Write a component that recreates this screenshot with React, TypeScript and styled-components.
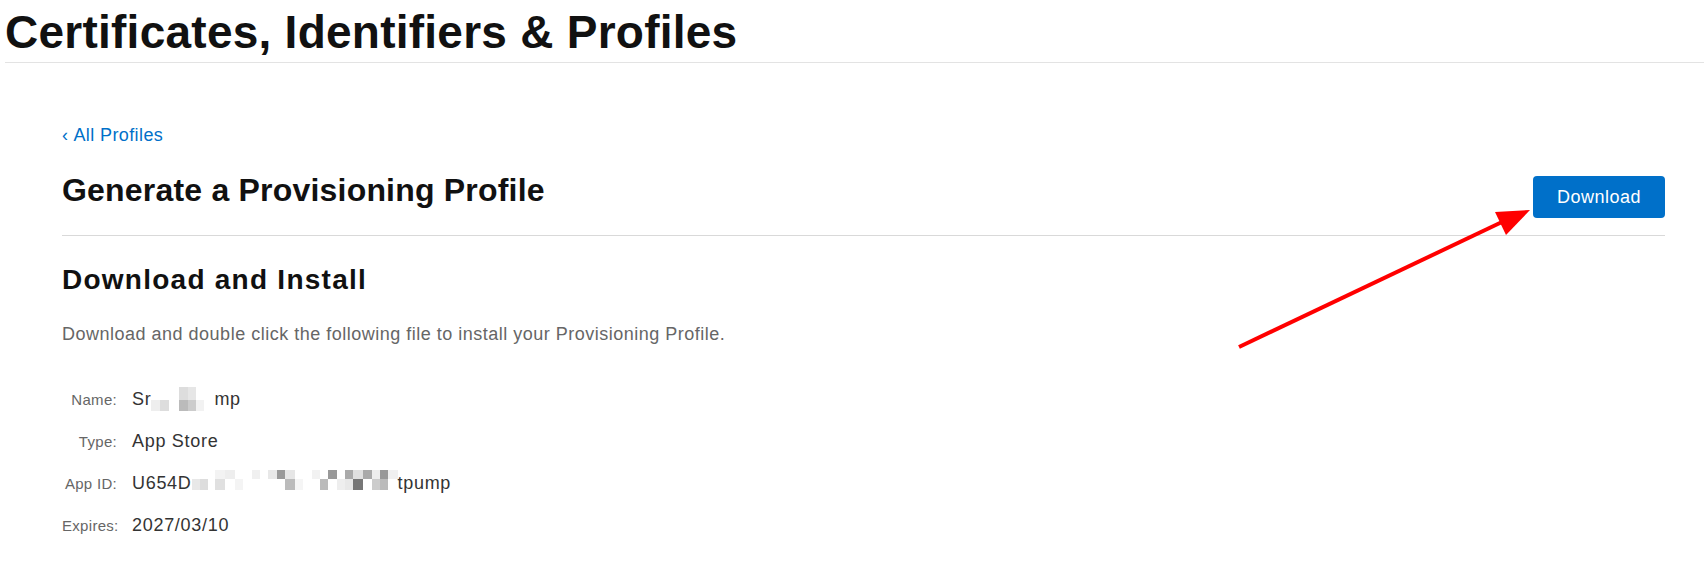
import React from "react";
import styled, { createGlobalStyle } from "styled-components";

const GlobalStyle = createGlobalStyle`
  html, body {
    margin: 0;
    padding: 0;
    background: #ffffff;
  }
  body {
    font-family: "Liberation Sans", Arial, sans-serif;
    color: #111111;
  }
`;

const Page = styled.div`
  position: relative;
  width: 100%;
  min-height: 565px;
  background: #ffffff;
  overflow: hidden;
`;

const Header = styled.header`
  margin-left: 5px;
  padding: 6px 0 4px 0;
  border-bottom: 1px solid #e3e3e3;
`;

const SiteTitle = styled.h1`
  margin: 0;
  font-size: 46px;
  line-height: 52px;
  font-weight: 700;
  letter-spacing: 0.25px;
  color: #111111;
  white-space: nowrap;
`;

const Main = styled.main`
  padding: 60px 39px 0 62px;
`;

const BackLink = styled.a`
  display: block;
  font-size: 18px;
  line-height: 24px;
  letter-spacing: 0.4px;
  color: #0070c9;
  text-decoration: none;
`;

const Chevron = styled.span`
  margin-right: 5px;
`;

const TitleRow = styled.div`
  display: flex;
  justify-content: space-between;
  align-items: flex-start;
  margin-top: 23px;
  padding-bottom: 17px;
  border-bottom: 1px solid #d9d9d9;
`;

const PageTitle = styled.h2`
  margin: 0;
  font-size: 32px;
  line-height: 40px;
  font-weight: 700;
  letter-spacing: 0.2px;
  color: #111111;
`;

const PrimaryButton = styled.button`
  margin-top: 6px;
  width: 132px;
  height: 42px;
  border: none;
  border-radius: 4px;
  background: #0070c9;
  color: #ffffff;
  font-family: "Liberation Sans", Arial, sans-serif;
  font-size: 18px;
  letter-spacing: 0.5px;
  cursor: pointer;
`;

const SectionTitle = styled.h3`
  margin: 27px 0 0 0;
  font-size: 28px;
  line-height: 34px;
  font-weight: 700;
  letter-spacing: 1.25px;
  color: #111111;
`;

const Description = styled.p`
  margin: 25px 0 0 0;
  font-size: 18px;
  line-height: 24px;
  letter-spacing: 0.5px;
  color: #666666;
`;

const Details = styled.dl`
  margin: 32px 0 0 0;
  display: grid;
  grid-template-columns: 55px auto;
  grid-auto-rows: 42px;
  column-gap: 15px;
  align-items: baseline;
  justify-content: start;
`;

const Label = styled.dt`
  margin: 0;
  font-size: 15px;
  line-height: 42px;
  letter-spacing: 0.3px;
  color: #666666;
  text-align: right;
  white-space: nowrap;
`;

const Value = styled.dd`
  margin: 0;
  font-size: 18px;
  line-height: 42px;
  letter-spacing: 0.7px;
  color: #333333;
  white-space: nowrap;
`;

const Redacted = styled.svg<{ $drop: number }>`
  display: inline-block;
  vertical-align: ${(p) => -p.$drop}px;
`;

const ArrowLayer = styled.svg`
  position: absolute;
  left: 0;
  top: 0;
  width: 1704px;
  height: 565px;
  pointer-events: none;
`;

type Cell = [number, number, number, number, string];

const nameCells: Cell[] = [
  [28, 0, 9, 13, "#dddddd"],
  [37, 0, 8, 13, "#e6e6e6"],
  [0, 13, 9, 11, "#eeeeee"],
  [9, 13, 9, 11, "#dddddd"],
  [28, 13, 9, 11, "#bbbbbb"],
  [37, 13, 8, 11, "#cccccc"],
  [45, 13, 8, 11, "#f2f2f2"],
];

const appIdCells: Cell[] = [
  [23, 0, 10, 9, "#f3f3f3"],
  [33, 0, 10, 9, "#eeeeee"],
  [60, 0, 8, 9, "#f0f0f0"],
  [76, 0, 9, 9, "#e8e8e8"],
  [85, 0, 8, 9, "#999999"],
  [93, 0, 10, 9, "#e6e6e6"],
  [120, 0, 8, 9, "#f2f2f2"],
  [136, 0, 9, 9, "#999999"],
  [153, 0, 8, 9, "#aaaaaa"],
  [161, 0, 10, 9, "#e0e0e0"],
  [171, 0, 9, 9, "#aaaaaa"],
  [180, 0, 8, 9, "#eeeeee"],
  [188, 0, 8, 9, "#999999"],
  [196, 0, 10, 9, "#f0f0f0"],
  [0, 9, 8, 11, "#e8e8e8"],
  [8, 9, 8, 11, "#dddddd"],
  [23, 9, 10, 11, "#e0e0e0"],
  [43, 9, 8, 11, "#f4f4f4"],
  [93, 9, 10, 11, "#bbbbbb"],
  [103, 9, 8, 11, "#f5f5f5"],
  [128, 9, 8, 11, "#bbbbbb"],
  [145, 9, 8, 11, "#eeeeee"],
  [153, 9, 8, 11, "#e8e8e8"],
  [161, 9, 10, 11, "#777777"],
  [180, 9, 8, 11, "#cccccc"],
  [188, 9, 8, 11, "#bbbbbb"],
];

function Mosaic({
  width,
  height,
  drop,
  cells,
}: {
  width: number;
  height: number;
  drop: number;
  cells: Cell[];
}) {
  return (
    <Redacted $drop={drop} width={width} height={height} viewBox={`0 0 ${width} ${height}`}>
      {cells.map(([x, y, w, h, c], i) => (
        <rect key={i} x={x} y={y} width={w} height={h} fill={c} />
      ))}
    </Redacted>
  );
}

export default function App() {
  return (
    <Page>
      <GlobalStyle />
      <Header>
        <SiteTitle>Certificates, Identifiers &amp; Profiles</SiteTitle>
      </Header>
      <Main>
        <BackLink href="#">
          <Chevron>‹</Chevron>All Profiles
        </BackLink>
        <TitleRow>
          <PageTitle>Generate a Provisioning Profile</PageTitle>
          <PrimaryButton>Download</PrimaryButton>
        </TitleRow>
        <SectionTitle>Download and Install</SectionTitle>
        <Description>
          Download and double click the following file to install your Provisioning Profile.
        </Description>
        <Details>
          <Label>Name:</Label>
          <Value>
            Sr
            <Mosaic width={63} height={24} drop={6} cells={nameCells} />
            mp
          </Value>
          <Label>Type:</Label>
          <Value>App Store</Value>
          <Label>App ID:</Label>
          <Value>
            U654D
            <Mosaic width={206} height={20} drop={1} cells={appIdCells} />
            tpump
          </Value>
          <Label>Expires:</Label>
          <Value>2027/03/10</Value>
        </Details>
      </Main>
      <ArrowLayer viewBox="0 0 1704 565">
        <line x1={1239} y1={347} x2={1502} y2={222} stroke="#ff0000" strokeWidth={4} />
        <polygon points="1530,210 1495,212 1506,235" fill="#ff0000" />
      </ArrowLayer>
    </Page>
  );
}
